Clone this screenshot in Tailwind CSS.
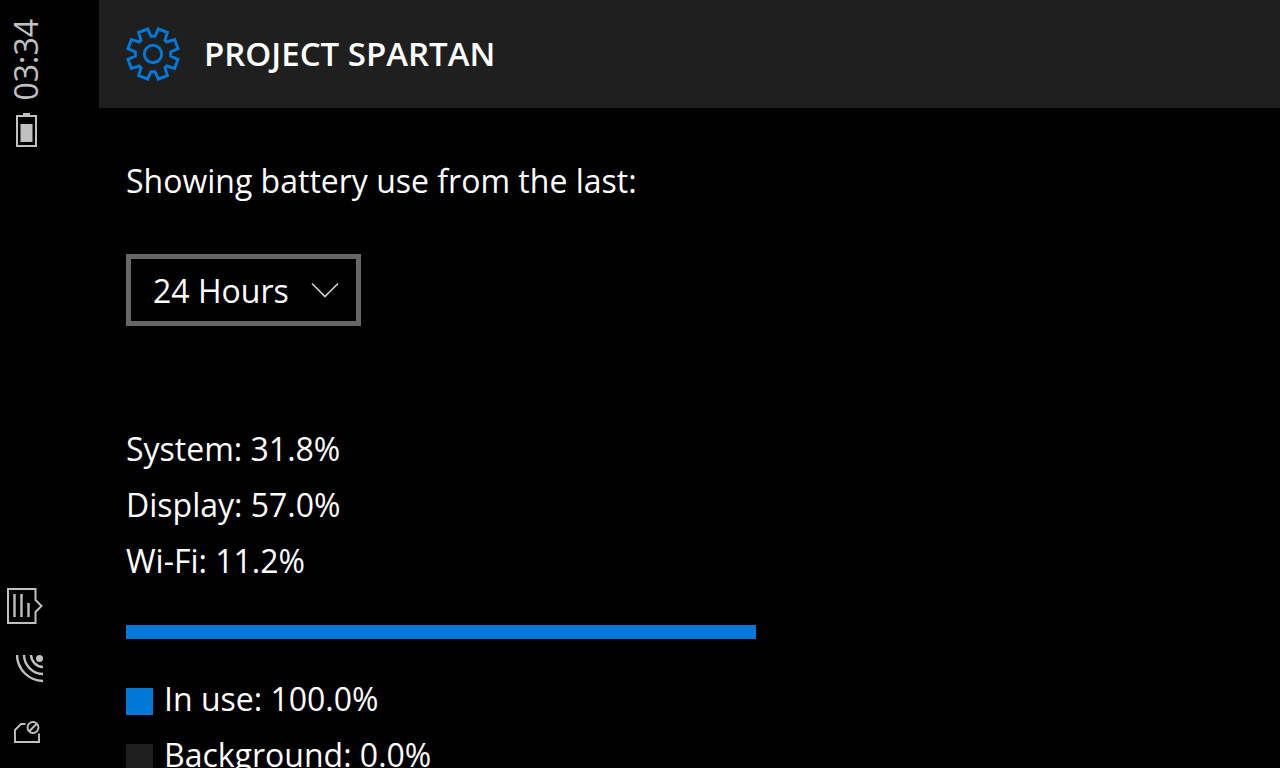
<!DOCTYPE html>
<html lang="en">
<head>
    <meta charset="UTF-8">
    <meta name="viewport" content="width=device-width, initial-scale=1.0">
    <title>Battery use</title>
    <script src="https://cdn.jsdelivr.net/npm/@tailwindcss/browser@4"></script>
</head>
<body class="flex h-screen overflow-hidden bg-black font-['Open_Sans','Noto_Sans',sans-serif] text-[32px] leading-[56px] text-white">
    <!-- Status bar -->
    <aside class="flex w-[99px] shrink-0 flex-col items-start justify-between pt-[19px] pb-[25px] text-[#c0c0c0]">
        <div class="flex w-[52px] flex-col items-center gap-3">
            <time class="rotate-180 leading-[44px] [writing-mode:vertical-rl]">03:34</time>
            <svg class="h-[34px] w-[21px]" viewBox="0 0 21 34" fill="currentColor" role="img" aria-label="Battery">
                <path d="M7 0h7v3H7z"/>
                <path d="M1 3h19v30H1z" fill="none" stroke="currentColor" stroke-width="2"/>
                <path d="M4.500 11h12v18h-12z"/>
            </svg>
        </div>
        <div class="flex w-[52px] flex-col">
            <svg class="ml-[7px] h-9 w-9" viewBox="0 0 36 36" fill="none" stroke="currentColor" stroke-width="2" role="img" aria-label="Notifications">
                <path d="M1 1h27.500v11l6 6-6 6v11H1z"/>
                <path d="M7.500 6v23M14.500 6v23M21.500 15v14" stroke-width="2.400"/>
            </svg>
            <svg class="mt-[31px] ml-4 h-7 w-[27px]" viewBox="0 0 27 28" fill="none" stroke="currentColor" stroke-width="2.400" role="img" aria-label="Wi-Fi">
                <path d="M15 0A12.500 12.500 0 0 0 27 12M8 0A19.500 19.500 0 0 0 27 19M1 0A26.500 26.500 0 0 0 27 26"/>
                <circle cx="23.500" cy="3.500" r="3.500" fill="currentColor" stroke="none"/>
            </svg>
            <svg class="mt-[38px] ml-[14px] h-[22px] w-[26px]" viewBox="0 0 26 22" fill="none" stroke="currentColor" stroke-width="1.900" role="img" aria-label="No SIM">
                <path d="M11.500 3H7L1 9V21h24v-8.500"/>
                <circle cx="19" cy="6.500" r="5.500"/>
                <path d="M15 10.500l8-8"/>
            </svg>
        </div>
    </aside>

    <main class="min-w-0 flex-1">
        <header class="flex h-[108px] items-center gap-6 bg-[#1f1f1f] px-[27px]">
            <svg class="size-[54px]" viewBox="-81 -81 162 162" fill="none" stroke="#0078d7" stroke-width="9" aria-hidden="true">
                <path d="M-6-53H6L16-75L43-65L36-41L41-36L65-43L75-16L53-6V6L75 16L65 43L41 36L36 41L43 65L16 75L6 53H-6L-16 75L-43 65L-36 41L-41 36L-65 43L-75 16L-53 6V-6L-75-16L-65-43L-41-36L-36-41L-43-65L-16-75Z"/>
                <circle r="26"/>
            </svg>
            <h1 class="text-[33px] font-semibold">PROJECT SPARTAN</h1>
        </header>

        <section class="px-[27px] pt-[45px]">
            <label for="period" class="block">Showing battery use from the last:</label>
            <div class="relative mt-[45px] w-[235px]">
                <select id="period" class="block h-[72px] w-full appearance-none border-[5px] border-[#666] bg-black pt-[2px] pl-[22px] leading-[56px] text-white outline-none">
                    <option>24 Hours</option>
                    <option>48 Hours</option>
                    <option>1 Week</option>
                </select>
                <svg class="pointer-events-none absolute top-[28px] right-[22px] h-4 w-7" viewBox="0 0 28 16" fill="none" stroke="#ccc" stroke-width="1.700" aria-hidden="true">
                    <path d="M1 1.500L14 14.500L27 1.500"/>
                </svg>
            </div>

            <ul class="mt-[95px]">
                <li>System: 31.8%</li>
                <li>Display: 57.0%</li>
                <li>Wi-Fi: 11.2%</li>
            </ul>

            <div class="mt-9 h-[14px] max-w-[630px] bg-[#1f1f1f]">
                <div class="h-full bg-[#0078d7]" style="width: 100%"></div>
            </div>

            <ul class="mt-8">
                <li class="flex items-center gap-[11px]"><span class="mt-1 size-[27px] bg-[#0078d7]"></span>In use: 100.0%</li>
                <li class="flex items-center gap-[11px]"><span class="mt-1 size-[27px] bg-[#1f1f1f]"></span>Background: 0.0%</li>
            </ul>
        </section>
    </main>
</body>
</html>
